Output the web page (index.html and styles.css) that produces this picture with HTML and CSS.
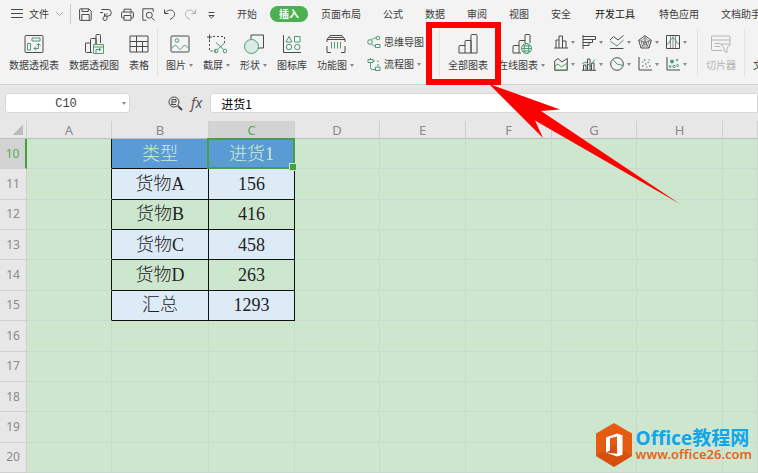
FILE: index.html
```
<!DOCTYPE html>
<html lang="zh-CN">
<head>
    <meta charset="UTF-8">
    <meta name="viewport" content="width=device-width, initial-scale=1.0">
    <title>表格</title>
    <link rel="stylesheet" href="styles.css">
</head>
<body>

    <!-- Menu bar -->
    <header class="menubar">
        <button class="file">
            <svg width="12" height="10" viewBox="0 0 12 10"><path d="M0 .5h12M0 4.5h12M0 8.5h12"/></svg>
            文件
            <svg class="soft" width="9" height="6" viewBox="0 0 9 6"><path d="M1 1l3.5 3.5L8 1"/></svg>
        </button>
        <div class="quick">
            <button aria-label="保存"><svg width="13" height="13" viewBox="0 0 13 13"><path d="M1.5.8h8.3l2.4 2.4v8.3a.9.9 0 0 1-.9.9H1.5a.9.9 0 0 1-.9-.9V1.5a.8.8 0 0 1 .9-.7zM3 1v2.5h6.3V1M2.8 12V6.5h7.4V12"/></svg></button>
            <button aria-label="输出"><svg width="13" height="13" viewBox="0 0 13 13"><path d="M1.5 1.5H8a3.3 3.3 0 0 1 0 6.6H4.5V5.5M7.3 5.2 4.5 8M7 8.2v2.3a2 2 0 1 1-2.2-2M0 4.5h3"/></svg></button>
            <button aria-label="打印"><svg width="13" height="13" viewBox="0 0 13 13"><path d="M3 4V1.2h7V4M3 10H1.6a1 1 0 0 1-1-1V5a1 1 0 0 1 1-1h9.8a1 1 0 0 1 1 1v4a1 1 0 0 1-1 1H10M3 7.5h7v4.7H3zM8.8 5.7h1.6"/></svg></button>
            <button aria-label="打印预览"><svg width="13" height="13" viewBox="0 0 13 13"><path d="M4.5 12.2H.8V.8h10.4v3"/><circle cx="7.3" cy="7.2" r="3"/><path d="m9.5 9.4 3 3"/></svg></button>
            <button aria-label="撤销"><svg width="13" height="13" viewBox="0 0 13 13"><path d="M1.5 1.5v4h4M1.8 5.2C4 2.5 7 1.2 9.6 2.7c3 1.9 2.3 5.6-.4 7.3L7 11.5"/></svg></button>
            <button aria-label="恢复" class="soft"><svg width="13" height="13" viewBox="0 0 13 13"><path d="M11.5 1.5v4h-4M11.2 5.2C9 2.5 6 1.2 3.4 2.7.4 4.6 1.1 8.3 3.8 10L6 11.5"/></svg></button>
            <button aria-label="更多"><svg width="13" height="13" viewBox="0 0 13 13"><path d="M3.5 4.5h6M3.8 7.5h5.4L6.5 10z"/></svg></button>
        </div>
        <nav class="tabs">
            <a href="#">开始</a>
            <a href="#" class="active">插入</a>
            <a href="#">页面布局</a>
            <a href="#">公式</a>
            <a href="#">数据</a>
            <a href="#">审阅</a>
            <a href="#">视图</a>
            <a href="#">安全</a>
            <a href="#" class="wide">开发工具</a>
            <a href="#">特色应用</a>
            <a href="#">文档助手</a>
        </nav>
    </header>

    <!-- Insert ribbon -->
    <div class="ribbon">
        <button class="tool">
            <svg width="20" height="20" viewBox="0 0 20 20"><rect x="1" y="1.5" width="18" height="17" rx="1"/><g class="green"><path d="M8 4h8v3H8zM3.5 9.5h3v6.500h-3zM10 14.500h4.500V10M12 12.500l-2 2 2 2M12.500 11.500l2-2 2 2"/></g></svg>
            <span>数据透视表</span>
        </button>
        <button class="tool">
            <svg width="20" height="20" viewBox="0 0 20 20"><path d="M8 18.500H2.500a1 1 0 0 1-1-1V9h5M6.500 18.500V5.500a1 1 0 0 1 1-1h4.500V10M12 10V1.500a1 1 0 0 1 1-1h2.500a1 1 0 0 1 1 1V9"/><g class="green"><path d="M9.500 10.500h10v9h-10zM9.500 13h10M12 19v-3.500h4M15 14l2 1.500-2 1.500"/></g></svg>
            <span>数据透视图</span>
        </button>
        <button class="tool">
            <svg width="20" height="20" viewBox="0 0 20 20"><path d="M1 2h18v16H1zM1 7.500h18M1 12.500h18M7.500 2v16M13.500 7.500V18"/></svg>
            <span>表格</span>
        </button>
        <i class="sep"></i>
        <button class="tool">
            <svg width="20" height="20" viewBox="0 0 20 20"><rect x="1" y="2" width="18" height="16" rx="1"/><g class="green"><circle cx="7" cy="6.500" r="1.800"/><path d="M2 14.500c2-4 4-4 6-1s3 2 4.500-.500 3.500-2 6 1.500"/></g></svg>
            <span class="drop">图片</span>
        </button>
        <button class="tool">
            <svg width="20" height="20" viewBox="0 0 20 20"><path d="M2.500.500v5M0 3h5"/><path stroke-dasharray="2 2" d="M6 2.500h11.500V9M2.500 6v11H9"/><g class="green"><path d="m9 8.500 7.500 7M18 8.500l-7.500 7"/><circle cx="9" cy="17" r="1.800"/><circle cx="18" cy="17" r="1.800"/></g></svg>
            <span class="drop">截屏</span>
        </button>
        <button class="tool">
            <svg width="20" height="20" viewBox="0 0 20 20"><path d="M7 5V1h12.500v13H14"/><circle class="green fill" cx="7.500" cy="12.500" r="7"/></svg>
            <span class="drop">形状</span>
        </button>
        <button class="tool">
            <svg width="20" height="20" viewBox="0 0 20 20"><path d="M1.500 1v17.500H19"/><g class="green"><path d="M7 2.500 10 8H4zM12.500 2.500h5.500V8h-5.500z"/><circle cx="7" cy="13" r="2.700"/><circle cx="15.300" cy="13" r="2.700"/></g></svg>
            <span>图标库</span>
        </button>
        <button class="tool">
            <svg width="20" height="20" viewBox="0 0 20 20"><path d="M4 1.500h12L19 5.500H1zM3.500 3.500h13M1 8V5.500h18V8M1 12v6.500h4M19 12v6.500h-4"/><path class="green" d="M5.500 8v6.500M8.500 8v6.500M11.500 8v6.500M14.500 8v6.500"/></svg>
            <span class="drop">功能图</span>
        </button>
        <div class="stack">
            <button>
                <svg class="green" width="14" height="14" viewBox="0 0 14 14"><circle cx="3" cy="7" r="2.300"/><circle cx="11" cy="3" r="1.800"/><path d="M4.500 5.200C5.500 3.500 7 3 9.200 3M4.500 8.800C5.500 10.500 7 11 8.500 11M8.500 9.500h4.500v3H8.500z"/></svg>
                <span>思维导图</span>
            </button>
            <button>
                <svg class="green" width="14" height="14" viewBox="0 0 14 14"><path d="M1 2.500h5v3H1zM3.500 5.500v5a2 2 0 0 0 2 2H8M8.500 10h4.500v3.500H8.500zM3.500 2.500V1"/><path stroke-dasharray="2 2" d="M6 4h5v6"/></svg>
                <span class="drop">流程图</span>
            </button>
        </div>
        <i class="sep"></i>
        <button class="tool">
            <svg width="20" height="20" viewBox="0 0 20 20"><path d="M1 12.500a1 1 0 0 1 1-1h5v7.500H1zM7 12V7.500a1 1 0 0 1 1-1h5V19H7M13 7V1.500a1 1 0 0 1 1-1h4a1 1 0 0 1 1 1V19h-6z"/></svg>
            <span>全部图表</span>
        </button>
        <button class="tool">
            <svg width="20" height="20" viewBox="0 0 20 20"><path d="M9 19H1v-6.500a1 1 0 0 1 1-1h5V19M7 12V7.500a1 1 0 0 1 1-1h5V9M13 7V1.500a1 1 0 0 1 1-1h3a1 1 0 0 1 1 1V9"/><g class="green"><circle cx="14.500" cy="14.500" r="5"/><ellipse cx="14.500" cy="14.500" rx="2.200" ry="5"/><path d="M9.500 14.500h10M10.500 12h8M10.500 17h8"/></g></svg>
            <span class="drop">在线图表</span>
        </button>
        <div class="charts">
            <button class="drop" aria-label="柱形图"><svg width="14" height="14" viewBox="0 0 14 14"><path d="M0 13h14M2 13V5h3v8M5 5V1h3.500v12M8.500 6H12v7"/></svg></button>
            <button class="drop" aria-label="条形图"><svg width="14" height="14" viewBox="0 0 14 14"><path d="M1 0v14M1 1.500h12.500v3H1M1 4.500h9.500v3H1M1 7.500h6v3H1"/></svg></button>
            <button class="drop" aria-label="折线图"><svg width="14" height="14" viewBox="0 0 14 14"><path d="M0 5l3.500-3.500L8 5l5.500-4.500M0 13.500h13.500"/><path class="green" d="M0 6l7 5 6.500-6"/></svg></button>
            <button class="drop" aria-label="雷达图"><svg width="14" height="14" viewBox="0 0 14 14"><path d="M7 .700 13.300 5.300 11 13H3L.700 5.300z"/><path stroke-width=".6" d="M7 3l4 3-1.500 5h-5L3 6zM7 5.500l2 1.500-.800 2.300H5.800L5 7zM7 .700V7.500M7 7.500l6.300-2.200M7 7.500l4 5.500M7 7.500 3 13M7 7.500.700 5.300"/></svg></button>
            <button class="drop" aria-label="股价图"><svg width="14" height="14" viewBox="0 0 14 14"><path d="M.500.500h13v13H.500z"/><path stroke-width=".6" d="M4.500 1v12M7 1v12M9.500 1v12"/><path class="green" d="M1 9c3 0 3-6 6-6s3 6 6 6"/></svg></button>
            <button class="drop" aria-label="面积图"><svg width="14" height="14" viewBox="0 0 14 14"><path d="M.700 13.300V4L4 1.500 8 5l5.300-3.500v11.800z"/><path class="green" d="M1 9l3-2 3.500 3L13 6v7H1z"/></svg></button>
            <button class="drop" aria-label="组合图"><svg width="14" height="14" viewBox="0 0 14 14"><path d="M0 13.300h14M1.500 13V8H4v5M5.500 13V2H8v11M9.500 13V6H12v7"/><path class="green" d="M0 6.500 4 5l4 4 5-6.500"/></svg></button>
            <button class="drop" aria-label="饼图"><svg width="14" height="14" viewBox="0 0 14 14"><circle cx="7" cy="7" r="6.300"/><path class="green" d="M3 2.500 7 7l6.200 1.500"/></svg></button>
            <button class="drop" aria-label="散点图"><svg width="14" height="14" viewBox="0 0 14 14"><path d="M1 0v13h13M4 9h1.500M7 7h1.500M11 9h1.500M6 3h1.500"/><path class="green" d="M4 5h1.500M8 10h1.500M10.500 3H12M9.500 5.500H11"/></svg></button>
            <button class="drop" aria-label="气泡图"><svg width="14" height="14" viewBox="0 0 14 14"><path d="M1 0v13h13"/><g class="green"><circle cx="6" cy="4.500" r="1.500" fill="#4e9a72"/><circle cx="11" cy="3" r=".800"/><circle cx="4" cy="9.500" r="1"/><circle cx="8" cy="9.500" r="1.200"/><circle cx="11.500" cy="8.500" r="1"/></g></svg></button>
        </div>
        <i class="sep"></i>
        <button class="tool disabled" disabled>
            <svg width="20" height="20" viewBox="0 0 20 20"><path d="M11 16.500H1.500a1 1 0 0 1-1-1V3a1 1 0 0 1 1-1H18a1 1 0 0 1 1 1v6M.500 6h18.500M3.500 9.500H9M3.500 12.500H9M9.500 10h10l-3.500 4v4.500l-3-1.500v-3z"/></svg>
            <span>切片器</span>
        </button>
        <i class="sep"></i>
        <button class="tool">
            <svg width="20" height="20" viewBox="0 0 20 20"><path d="M1 2h18v16H1zM6 6h8M10 6v8"/></svg>
            <span>文本框</span>
        </button>
    </div>

    <!-- Formula bar -->
    <div class="formula-bar">
        <div class="name-box">
            <input type="text" value="C10" aria-label="名称框">
            <i class="caret"></i>
        </div>
        <svg width="15" height="15" viewBox="0 0 15 15"><circle cx="6" cy="6" r="5"/><path stroke-width="2" d="m10 10 4 4"/><path d="M4 8.500V3.500h4v2.500H4M3 8.500h5"/></svg>
        <label class="fx" for="formula">fx</label>
        <input type="text" id="formula" class="formula" value="进货1">
    </div>

    <!-- Sheet -->
    <main class="sheet">
        <table>
            <colgroup>
                <col class="w-head"><col class="w-85"><col class="w-97"><col class="w-86"><col class="w-85"><col class="w-86"><col class="w-86"><col class="w-85"><col class="w-86"><col>
            </colgroup>
            <thead>
                <tr><th class="corner"></th><th>A</th><th>B</th><th class="current">C</th><th>D</th><th>E</th><th>F</th><th>G</th><th>H</th><th></th></tr>
            </thead>
            <tbody>
                <tr><th class="current">10</th><td class="edge"></td><td class="data title">类型</td><td class="data title selected">进货1</td><td></td><td></td><td></td><td></td><td></td><td></td></tr>
                <tr><th>11</th><td class="edge"></td><td class="data band">货物A</td><td class="data band">156</td><td></td><td></td><td></td><td></td><td></td><td></td></tr>
                <tr><th>12</th><td class="edge"></td><td class="data">货物B</td><td class="data">416</td><td></td><td></td><td></td><td></td><td></td><td></td></tr>
                <tr><th>13</th><td class="edge"></td><td class="data band">货物C</td><td class="data band">458</td><td></td><td></td><td></td><td></td><td></td><td></td></tr>
                <tr><th>14</th><td class="edge"></td><td class="data">货物D</td><td class="data">263</td><td></td><td></td><td></td><td></td><td></td><td></td></tr>
                <tr><th>15</th><td class="edge"></td><td class="data band">汇总</td><td class="data band">1293</td><td></td><td></td><td></td><td></td><td></td><td></td></tr>
                <tr><th>16</th><td></td><td></td><td></td><td></td><td></td><td></td><td></td><td></td><td></td></tr>
                <tr><th>17</th><td></td><td></td><td></td><td></td><td></td><td></td><td></td><td></td><td></td></tr>
                <tr><th>18</th><td></td><td></td><td></td><td></td><td></td><td></td><td></td><td></td><td></td></tr>
                <tr><th>19</th><td></td><td></td><td></td><td></td><td></td><td></td><td></td><td></td><td></td></tr>
                <tr><th>20</th><td></td><td></td><td></td><td></td><td></td><td></td><td></td><td></td><td></td></tr>
            </tbody>
        </table>
    </main>

    <!-- Site logo over the sheet -->
    <a href="#" class="brand">
        <svg width="38" height="44" viewBox="0 0 38 44">
            <path fill="#e55b13" d="M19 0 37 10.500v22.500L19 44 1 33V10.500z"/>
            <path fill="#c9430c" d="M1 33l18-11 18 11-18 11z" opacity=".5"/>
            <path fill="#fff" d="M11 14.500 22 10.500l5.500 1.700v19.600L22 33.500 11 29.500l11 1.300V13.500l-7 1.700v12.300l-4 2z"/>
        </svg>
        <span class="brand-text">
            <span class="brand-name">Office教程网</span>
            <span class="brand-url">www.office26.com</span>
        </span>
    </a>

    <!-- Red box and arrow -->
    <svg class="callout" width="700" height="220" viewBox="0 0 700 220">
        <rect x="429" y="25" width="69" height="57" fill="none" stroke="#f00" stroke-width="6"/>
        <path fill="#f00" d="M489 84 560 109.500 541 111 680 204 535 120.500 543 138z"/>
    </svg>

</body>
</html>
```
FILE: styles.css
```
/* General Styles */
* {
    box-sizing: border-box;
}

body {
    margin: 0;
    height: 100vh;
    display: flex;
    flex-direction: column;
    position: relative;
    overflow: hidden;
    background-color: #f3f3f3;
    color: #3c3c3c;
    font-family: "Noto Sans CJK SC", sans-serif;
    font-size: 10px;
    line-height: 14px;
}

button, input {
    margin: 0;
    padding: 0;
    border: none;
    background: none;
    color: inherit;
    font: inherit;
}

a {
    color: inherit;
    text-decoration: none;
}

svg {
    flex: none;
    fill: none;
    stroke: #4a4a4a;
    stroke-width: 1;
}

.green {
    stroke: #4e9a72;
}

.fill {
    fill: #dcebe2;
}

.soft, .soft svg {
    stroke: #aaa;
}

/* Menu bar */
.menubar {
    display: flex;
    align-items: center;
    flex: none;
    height: 28px;
    padding-left: 11px;
    white-space: nowrap;
}

.file {
    display: flex;
    align-items: center;
    gap: 6px;
}

.quick {
    display: flex;
    gap: 8px;
    margin-left: 6px;
    padding-left: 8px;
    border-left: 1px solid #ccc;
    height: 20px;
    align-items: center;
}

.quick button {
    display: flex;
}

.tabs {
    display: flex;
    gap: 4px;
    margin-left: 10px;
}

.tabs a {
    padding: 1px 9px;
    border-radius: 8px;
}

.tabs .wide {
    padding: 1px 11px;
    color: #111;
}

.tabs .active {
    background-color: #4caf50;
    color: white;
    font-weight: bold;
}

/* Ribbon */
.ribbon {
    display: flex;
    align-items: center;
    flex: none;
    height: 57px;
    padding: 0 0 6px 4px;
    border-bottom: 1px solid #d2d2d2;
    white-space: nowrap;
}

.tool {
    display: flex;
    flex-direction: column;
    align-items: center;
    flex: none;
    gap: 4px;
    padding: 0 5px;
}

.drop {
    display: flex;
    align-items: center;
    gap: 3px;
}

.drop::after, .caret {
    content: "";
    border: 2px solid transparent;
    border-top: 3px solid #888;
    border-bottom: none;
}

.sep {
    flex: none;
    width: 1px;
    height: 48px;
    margin: 0 3px;
    background-color: #e4e4e4;
}

.stack {
    display: flex;
    flex-direction: column;
    flex: none;
    gap: 8px;
    padding: 0 12px 0 8px;
}

.stack button {
    display: flex;
    align-items: center;
    gap: 3px;
}

.charts {
    display: grid;
    grid-template-columns: repeat(5, 28px);
    flex: none;
    gap: 8px 0;
    padding-left: 4px;
}

.disabled {
    color: #b4b4b4;
}

.disabled svg {
    stroke: #b4b4b4;
}

/* Formula bar */
.formula-bar {
    display: flex;
    align-items: center;
    flex: none;
    height: 36px;
    padding-left: 5px;
    background-color: #e7e7e7;
    color: #222;
}

.name-box {
    display: flex;
    align-items: center;
    width: 125px;
    height: 20px;
    margin-right: 38px;
    padding: 0 3px 0 4px;
    border: 1px solid #d8d8d8;
    border-radius: 3px;
    background-color: white;
}

.name-box input {
    flex: 1;
    min-width: 0;
    height: 18px;
    padding-top: 2px;
    text-align: center;
    color: #444;
    font-family: "Liberation Mono", monospace;
    font-size: 12px;
}

.fx {
    margin: 0 8px;
    color: #555;
    font-family: "Noto Sans", sans-serif;
    font-size: 14px;
    font-style: italic;
}

.formula {
    flex: 1;
    min-width: 0;
    height: 20px;
    padding-left: 10px;
    border: 1px solid #d8d8d8;
    border-radius: 3px 0 0 3px;
    background-color: white;
    color: black;
    font-size: 12px;
}

/* Sheet */
.sheet {
    flex: 1;
    min-height: 0;
    background-color: #cde7cf;
}

table {
    width: 100%;
    height: 100%;
    table-layout: fixed;
    border-collapse: separate;
    border-spacing: 0;
}

.w-head { width: 27px; }
.w-85 { width: 85px; }
.w-86 { width: 86px; }
.w-97 { width: 97px; }

th, td {
    height: 30px;
    padding: 0;
    border-right: 1px solid #c9d9cd;
    border-bottom: 1px solid #c9d9cd;
    text-align: center;
}

th {
    background-color: #e7e7e7;
    border-color: #cfcfcf;
    color: #8a8a8a;
    font-family: "Noto Sans", sans-serif;
    font-size: 12px;
    font-weight: normal;
}

thead th {
    height: 18px;
    border-bottom-color: #bdbdbd;
    font-size: 13px;
}

.corner {
    background: linear-gradient(135deg, transparent 50%, #bbb 50%) 13px 4px / 10px 10px no-repeat #e7e7e7;
}

th.current {
    background-color: #d3d3d3;
    color: #4caf50;
}

tbody th.current {
    border-right: 2px solid #3fa43f;
}

.edge {
    border-right-color: #111;
}

.data {
    border-color: #111;
    color: #222;
    font-family: "Liberation Serif", "Noto Sans CJK SC", serif;
    font-size: 18px;
    font-weight: 300;
    line-height: 20px;
}

.title {
    background-color: #5b9bd5;
    color: #cdeecf;
}

.band {
    background-color: #ddebf7;
}

/* Selection frame and fill handle */
.selected {
    position: relative;
}

.selected::before {
    content: "";
    position: absolute;
    inset: -1px -1px -1px -2px;
    border: 2px solid #3fa43f;
}

.selected::after {
    content: "";
    position: absolute;
    right: -3px;
    bottom: -3px;
    width: 6px;
    height: 6px;
    border: 1px solid #cde7cf;
    background-color: #3fa43f;
}

/* Logo */
.brand {
    position: absolute;
    right: 6px;
    bottom: 6px;
    display: flex;
    align-items: center;
    gap: 3px;
}

.brand svg {
    stroke: none;
}

.brand-text {
    display: flex;
    flex-direction: column;
}

.brand-name {
    color: #12a5ea;
    font-family: "Noto Sans", "Noto Sans CJK SC", sans-serif;
    font-size: 19px;
    font-weight: bold;
    line-height: 18px;
}

.brand-url {
    color: #e8641b;
    font-family: "Noto Sans", sans-serif;
    font-size: 13px;
    font-weight: 600;
    line-height: 14px;
}

/* Callout */
.callout {
    position: absolute;
    top: 0;
    left: 0;
    stroke: none;
    pointer-events: none;
}
```
